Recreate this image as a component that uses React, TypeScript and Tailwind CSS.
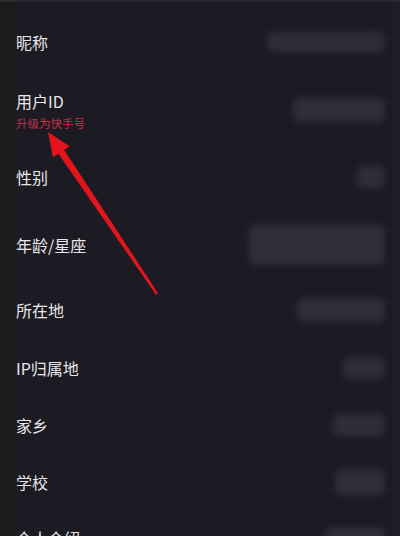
import React from "react";

type Row = {
  label: string;
  height: string;
  blur: string;
  sub?: string;
};

const rows: Row[] = [
  { label: "昵称", height: "h-[58px]", blur: "w-[118px] h-[20px]" },
  { label: "用户ID", height: "h-[78px]", blur: "w-[92px] h-[24px]", sub: "升级为快手号" },
  { label: "性别", height: "h-[56px]", blur: "w-[28px] h-[22px]" },
  { label: "年龄/星座", height: "h-[80px]", blur: "w-[136px] h-[40px]" },
  { label: "所在地", height: "h-[50px]", blur: "w-[88px] h-[24px]" },
  { label: "IP归属地", height: "h-[66px]", blur: "w-[42px] h-[22px]" },
  { label: "家乡", height: "h-[48px]", blur: "w-[52px] h-[22px]" },
  { label: "学校", height: "h-[66px]", blur: "w-[50px] h-[26px]" },
  { label: "个人介绍", height: "h-[46px]", blur: "w-[60px] h-[22px]" },
];

function ProfileRow({ row }: { row: Row }) {
  return (
    <div className={`${row.height} flex items-center justify-between pl-4 pr-[15px]`}>
      <div className="flex flex-col">
        <span className="text-[16px] leading-6 text-[#e6e6ea]">{row.label}</span>
        {row.sub && (
          <span className="text-[11.5px] leading-4 mt-[2px] text-[#c4304a]">{row.sub}</span>
        )}
      </div>
      {/* mosaic-blurred value */}
      <div className={`${row.blur} rounded-md bg-[#2e2d38] blur-[3px]`} />
    </div>
  );
}

function Arrow() {
  return (
    <svg
      className="absolute left-0 top-0 pointer-events-none"
      width="400"
      height="536"
      viewBox="0 0 400 536"
    >
      <polygon
        points="48,130 69.6,144.3 64.2,147.9 158,291.3 156,292.7 58.4,151.8 53,155.5"
        fill="#e3141c"
      />
    </svg>
  );
}

export default function App() {
  return (
    <div
      className="relative w-[400px] h-[536px] overflow-hidden bg-[#1c1b24] border-t-2 border-[#2a2931]"
      style={{ fontFamily: '"Noto Sans CJK SC", "Noto Sans", sans-serif' }}
    >
      <div className="absolute left-0 top-0 bottom-0 w-[15px] bg-[#1b1b1c]" />
      <div className="absolute right-0 top-0 bottom-0 w-[8px] bg-[#1f1e27]" />
      <div className="relative pt-[11px]">
        {rows.map((row) => (
          <ProfileRow key={row.label} row={row} />
        ))}
      </div>
      <Arrow />
    </div>
  );
}
